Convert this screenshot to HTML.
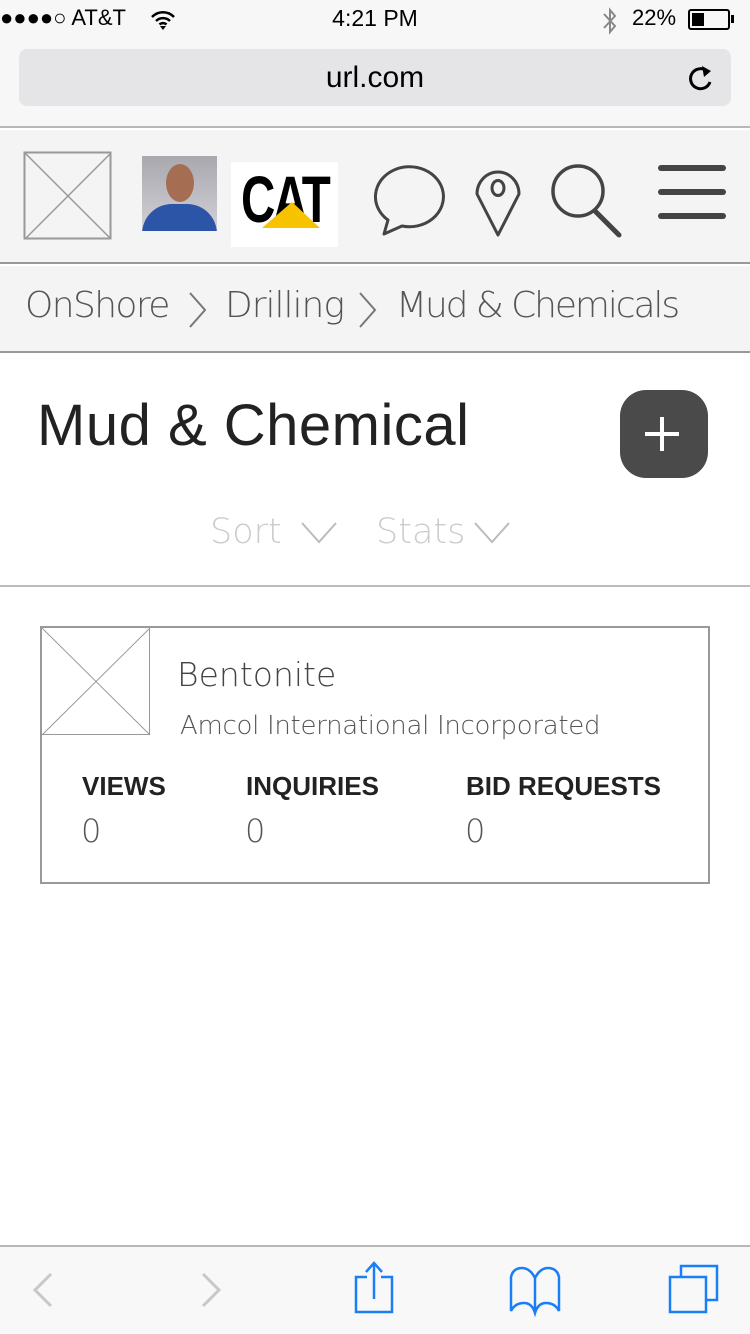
<!DOCTYPE html>
<html><head><meta charset="utf-8"><style>
*{margin:0;padding:0;box-sizing:border-box}
body{width:750px;height:1334px;position:relative;background:#fff;font-family:"Liberation Sans",sans-serif;overflow:hidden}
.a{position:absolute}
.d{font-family:'DejaVu Sans','Liberation Sans',sans-serif;font-weight:200}
</style></head><body>
<div class="a" style="left:0;top:0;width:750px;height:128px;background:#f7f7f7;border-bottom:2px solid #b8b8b8"></div>
<div class="a" style="left:0;top:5px;font-size:22px;color:#000">●●●●○ AT&amp;T</div>
<svg class="a" style="left:150px;top:9px" width="26" height="22" viewBox="0 0 26 22"><path d="M2 8 A15 15 0 0 1 24 8 M6 12 A10 10 0 0 1 20 12 M9.5 15.5 A5 5 0 0 1 16.5 15.5" stroke="#000" stroke-width="2.5" fill="none"/><path d="M13 21 L10 17 L16 17Z" fill="#000"/></svg>
<div class="a" style="left:0;width:750px;text-align:center;top:5px;font-size:23px">4:21 PM</div>
<svg class="a" style="left:600px;top:7px" width="20" height="28"><path d="M4 7L15 19L10 25V3L15 9L4 21" stroke="#888" stroke-width="2" fill="none"/></svg>
<div class="a" style="left:632px;top:5px;font-size:22px">22%</div>
<div class="a" style="left:688px;top:9px;width:42px;height:21px;border:2px solid #000;border-radius:3px"><div style="width:12px;height:13px;margin:2px;background:#000"></div></div>
<div class="a" style="left:731px;top:15px;width:3px;height:8px;background:#000"></div>
<div class="a" style="left:19px;top:49px;width:712px;height:57px;background:#e5e5e7;border-radius:8px;text-align:center;font-size:30px;line-height:57px">url.com</div>
<svg class="a" style="left:686px;top:62px" width="30" height="32" viewBox="0 0 30 32"><path d="M22 10 A10 10 0 1 0 24 20" stroke="#000" stroke-width="3" fill="none"/><path d="M16 4 L25 9 L18 15Z" fill="#000"/></svg>

<div class="a" style="left:0;top:130px;width:750px;height:134px;background:#f4f4f4;border-bottom:2px solid #999"></div>
<svg class="a" style="left:23px;top:151px" width="90" height="90"><rect x="1.5" y="1.5" width="86" height="86" fill="none" stroke="#999" stroke-width="2"/><path d="M2 2L88 88M88 2L2 88" stroke="#999" stroke-width="1.5"/></svg>
<div class="a" style="left:142px;top:156px;width:75px;height:75px;background:linear-gradient(#a8a8ae,#d0d0d6);overflow:hidden"><div style="position:absolute;left:24px;top:8px;width:28px;height:38px;border-radius:50%;background:#a56e52"></div><div style="position:absolute;left:0;top:48px;width:75px;height:40px;border-radius:30px 30px 0 0;background:#2c55a8"></div></div>
<div class="a" style="left:231px;top:162px;width:107px;height:85px;background:#fff;overflow:hidden"><div style="position:absolute;left:10px;top:6px;font:bold 66px/62px 'Liberation Sans',sans-serif;letter-spacing:-3px;transform:scaleX(.72);transform-origin:left">CAT</div><svg style="position:absolute;left:0;top:0" width="107" height="85"><path d="M61 40L89 66H31Z" fill="#f7c200"/></svg></div>
<svg class="a" style="left:370px;top:164px" width="76" height="76" viewBox="0 0 76 76"><path d="M14 70 L18 56 A34 30 0 1 1 32 62 Z" fill="none" stroke="#444" stroke-width="3" stroke-linejoin="round"/></svg>
<svg class="a" style="left:472px;top:164px" width="52" height="74" viewBox="0 0 52 74"><path d="M26 71 L5 30 A21 22 0 1 1 47 30 Z" fill="none" stroke="#444" stroke-width="3" stroke-linejoin="round"/><ellipse cx="26" cy="24" rx="6" ry="7.5" fill="none" stroke="#444" stroke-width="3"/></svg>
<svg class="a" style="left:548px;top:162px" width="78" height="78" viewBox="0 0 78 78"><circle cx="30" cy="29" r="25" fill="none" stroke="#444" stroke-width="3.5"/><path d="M47 49 L71 73" stroke="#444" stroke-width="5" stroke-linecap="round"/></svg>
<div class="a" style="left:658px;top:165px;width:68px;height:6px;border-radius:3px;background:#444"></div>
<div class="a" style="left:658px;top:189px;width:68px;height:6px;border-radius:3px;background:#444"></div>
<div class="a" style="left:658px;top:213px;width:68px;height:6px;border-radius:3px;background:#444"></div>

<div class="a" style="left:0;top:266px;width:750px;height:87px;background:#f4f4f4;border-bottom:2px solid #999"></div>
<div class="a d" style="left:25px;top:285px;font-size:36px;color:#555;white-space:nowrap;letter-spacing:-1.6px">OnShore</div>
<svg class="a" style="left:187px;top:290px" width="22" height="40"><path d="M3 3L18 20L3 37" stroke="#777" stroke-width="2" fill="none"/></svg>
<div class="a d" style="left:225px;top:285px;font-size:36px;color:#555;letter-spacing:-1px">Drilling</div>
<svg class="a" style="left:357px;top:290px" width="22" height="40"><path d="M3 3L18 20L3 37" stroke="#777" stroke-width="2" fill="none"/></svg>
<div class="a d" style="left:396px;top:285px;font-size:36px;color:#555;white-space:nowrap;letter-spacing:-2.1px">Mud &amp; Chemicals</div>

<div class="a" style="left:37px;top:392px;font-size:58px;color:#222;white-space:nowrap;letter-spacing:0.5px">Mud &amp; Chemical</div>
<div class="a" style="left:620px;top:390px;width:88px;height:88px;border-radius:26px;background:#4a4a4a"></div>
<div class="a" style="left:645px;top:432px;width:34px;height:4px;background:#fff"></div>
<div class="a" style="left:660px;top:417px;width:4px;height:34px;background:#fff"></div>
<div class="a d" style="left:210px;top:512px;font-size:35px;color:#ccc">Sort</div>
<svg class="a" style="left:300px;top:520px" width="38" height="26"><path d="M2 3L19 22L36 3" stroke="#bbb" stroke-width="2" fill="none"/></svg>
<div class="a d" style="left:376px;top:512px;font-size:35px;color:#ccc">Stats</div>
<svg class="a" style="left:473px;top:520px" width="38" height="26"><path d="M2 3L19 22L36 3" stroke="#bbb" stroke-width="2" fill="none"/></svg>
<div class="a" style="left:0;top:585px;width:750px;height:2px;background:#bbb"></div>

<div class="a" style="left:40px;top:626px;width:670px;height:258px;border:2px solid #999"></div>
<svg class="a" style="left:41px;top:627px" width="110" height="109"><rect x="0.5" y="0.5" width="108" height="107" fill="none" stroke="#999"/><path d="M1 1L109 108M109 1L1 108" stroke="#999"/></svg>
<div class="a d" style="left:177px;top:655px;font-size:33px;color:#444">Bentonite</div>
<div class="a d" style="left:180px;top:711px;font-size:26px;color:#555;white-space:nowrap;letter-spacing:-0.3px">Amcol International Incorporated</div>
<div class="a" style="left:82px;top:771px;font-size:26px;font-weight:bold;color:#222">VIEWS</div>
<div class="a" style="left:246px;top:771px;font-size:26px;font-weight:bold;color:#222">INQUIRIES</div>
<div class="a" style="left:466px;top:771px;font-size:26px;font-weight:bold;color:#222">BID REQUESTS</div>
<div class="a d" style="left:81px;top:812px;font-size:32px;color:#555">0</div>
<div class="a d" style="left:245px;top:812px;font-size:32px;color:#555">0</div>
<div class="a d" style="left:465px;top:812px;font-size:32px;color:#555">0</div>

<div class="a" style="left:0;top:1245px;width:750px;height:89px;background:#f8f8f8;border-top:2px solid #b8b8b8"></div>
<svg class="a" style="left:0;top:0" width="750" height="1334"><g fill="none">
<path d="M51 1274L35 1290L51 1306M203 1274L219 1290L203 1306" stroke="#c8c8c8" stroke-width="3"/>
<g stroke="#1a7ef5" stroke-width="2.5">
<path d="M367 1277H356V1312H392V1277H381M374 1299V1264M366 1272L374 1263L382 1272"/>
<path d="M535 1311V1278Q530 1268 522 1268Q513 1268 511 1277V1311Q515 1303 524 1303Q532 1303 535 1313Q538 1303 546 1303Q555 1303 559 1311V1277Q557 1268 548 1268Q540 1268 535 1278"/>
<path d="M670 1277H706V1312H670Z M681 1276V1266H717V1300H707"/>
</g></g></svg>
</body></html>
